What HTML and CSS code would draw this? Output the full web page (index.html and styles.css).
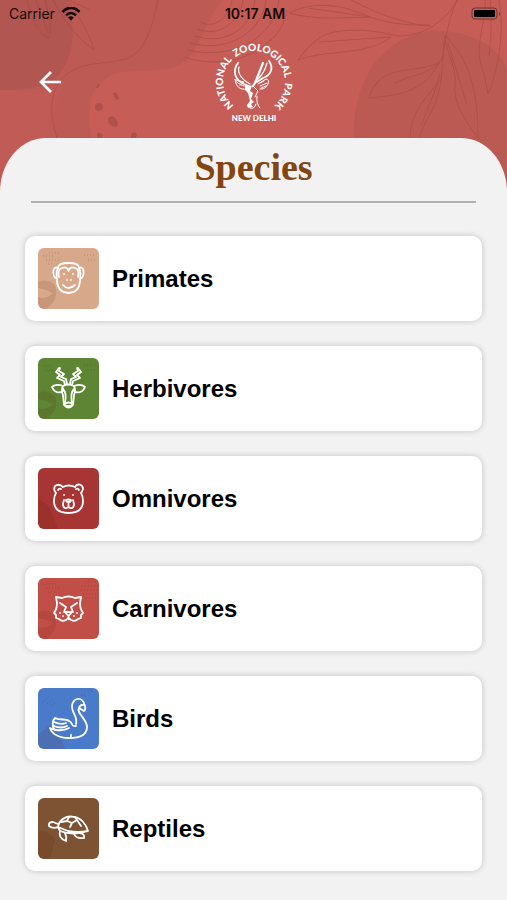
FILE: index.html
```html
<!DOCTYPE html>
<html lang="en">
<head>
    <meta charset="utf-8">
    <meta name="viewport" content="width=device-width, initial-scale=1">
    <title>Species - National Zoological Park</title>
    <link rel="stylesheet" href="styles.css">
</head>

<body>
    <header class="header">
        <!-- Decorative foliage behind the header -->
        <svg class="header-art" viewBox="0 0 507 196" preserveAspectRatio="xMidYMin slice" aria-hidden="true">
            <rect width="507" height="196" fill="#c65d57"/>
            <path d="M0 0H223C213 10 209 22 201 37C193 53 188 65 166 69C140 73 116 67 102 82C89 91 88 106 91 138V196H0Z" fill="#bd5a54"/>
            <path d="M0 0H67C74 19 77 52 60 73C48 90 20 90 0 90Z" fill="#b15650"/>
            <path d="M354 138C352 80 382 38 430 31C468 29 497 46 507 67V196H354Z" fill="#bb5953"/>
            <path d="M0 90C20 90 42 90 53 88C72 71 48 105 57 138L62 196H0Z" fill="#c05b55"/>
            <g fill="none" stroke="#a94c47" stroke-opacity="0.7" stroke-width="1">
                <path d="M158 0C151 34 143 53 126 59C108 64 86 62 72 71C49 84 48 111 57 138"/>
                <path d="M27 0C32 25 44 37 49 38C53 31 47 8 45 0M36 0L48 33M53 0C64 22 82 43 94 49C88 31 76 11 67 0M69 0L90 10"/>
                <path d="M200 22C213 29 228 20 232 0M197 29C219 38 240 22 243 0M195 36C227 46 252 27 255 0M190 43C228 54 263 31 266 0M187 50C233 61 274 38 279 0M184 57C235 74 283 44 287 10"/>
                <path d="M458 0C444 22 424 36 398 36C378 31 353 28 335 32C320 34 308 46 298 60C327 49 368 56 391 37M319 42L391 37"/>
                <path d="M430 25C408 26 386 23 370 17C340 18 315 20 289 13C316 0 343 5 370 17M308 8L370 17M351 0C375 12 402 24 430 26"/>
                <path d="M457 0C444 29 446 51 440 62C422 72 395 67 382 78C375 84 371 91 369 98C399 95 423 93 440 62M395 83C412 74 426 76 440 62"/>
                <path d="M445 35C441 64 445 93 426 121L419 137M440 74C437 92 411 104 410 137M439 80L421 126"/>
                <path d="M445 35C462 54 478 74 478 138C466 121 453 104 455 84C457 67 445 51 445 35M448 43L467 105"/>
                <path d="M485 0C487 22 472 47 484 74L488 94C498 73 505 29 499 0M490 0C492 23 491 38 489 55"/>
            </g>
            <g fill="#af514b">
                <ellipse cx="98" cy="86" rx="3" ry="1" transform="rotate(-50 98 86)"/>
                <ellipse cx="116" cy="96" rx="2" ry="4" transform="rotate(-32 116 96)"/>
                <ellipse cx="99" cy="107" rx="4" ry="4"/>
                <path d="M108 118q4-4 8 1q4 5 0 8q-9-1-8-9zM97 134q3-4 6 2l-1 2h-5zM131 134q3-3 6 0l-1 4h-5z"/>
            </g>
        </svg>

        <div class="status-bar">
            <div class="status-carrier">
                <span>Carrier</span>
                <svg class="wifi" viewBox="0 0 20 14" aria-hidden="true">
                    <path d="M1.500 5C7-.5 13-.5 18.500 5M5 8.300C8 5.300 12 5.300 15 8.300" fill="none" stroke="#160b0b" stroke-width="2.600"/>
                    <path d="M7 10.500Q10 8 13 10.500L10 13.500Z" fill="#160b0b"/>
                </svg>
            </div>
            <time class="status-time">10:17 AM</time>
            <svg class="battery" viewBox="0 0 30 14" aria-hidden="true">
                <rect x="1" y="1" width="25" height="11" rx="3" fill="none" stroke="#75332f"/>
                <rect x="3" y="3" width="21" height="7" rx="1" fill="#000000"/>
                <path d="M28 5q2 2 0 4z" fill="#75332f"/>
            </svg>
        </div>

        <div class="top-bar">
            <button class="back-btn" type="button" aria-label="Back">
                <svg viewBox="0 0 24 24" aria-hidden="true">
                    <path d="M23 12H3M13 2L3 12L13 22" fill="none" stroke="#ffffff" stroke-width="2.700"/>
                </svg>
            </button>
            <svg class="logo" viewBox="0 0 90 90" role="img" aria-label="National Zoological Park, New Delhi">
                <path id="logo-arc" d="M26.700 70A31 31 0 1 1 63.300 70" fill="none"/>
                <text class="logo-ring"><textPath href="#logo-arc" startOffset="50%">NATIONAL&#160; ZOOLOGICAL&#160; PARK</textPath></text>
                <g fill="none" stroke="#ffffff" stroke-linecap="round" stroke-linejoin="round">
                    <path d="M29 26C23 34 26 43 35 47L40 50" stroke-width="1.800"/>
                    <path d="M30 30C28 36 33 43 41 47M58 26Q55 37 48 43" stroke-width="1.200"/>
                    <path d="M60 24C65 31 62 38 54 41L48 45" stroke-width="1.800"/>
                    <path d="M54 26L46 46L44 49" stroke-width="2.200"/>
                    <path d="M35 49C29 47 26 44 26 42C27 50 31 53 37 52M27 43L35 45L31 48M49 47L57 42Q61 43 59 47Q56 53 51 52M51 49L58 46M52 51L57 49M51 46L55 44" stroke-width="1"/>
                    <path d="M45 50L49 54L46 60M48 59Q47 67 51 71M41 71Q45 73 47 67" stroke-width="1"/>
                </g>
                <path d="M36 47L43 49L41 54L44 56L42 62L45 65L42 67L44 70L39 71L38 68L41 64L39 56L36 53Z" fill="#ffffff"/>
                <text class="logo-city" x="45" y="84">NEW DELHI</text>
            </svg>
        </div>
    </header>

    <main class="panel">
        <h1 class="title">Species</h1>

        <ul class="species-list">
            <li>
                <a class="species-card" href="#primates">
                    <svg class="tile tile-primates" viewBox="0 0 61 61" aria-hidden="true">
                        <g class="shade"><path d="M0 34Q8 30 16 36Q20 43 17 51Q13 58 8 61H0V49Q8 52 15 45Q8 41 0 40Z"/></g>
                        <path class="speckle" d="M5 8h12M8 12h14M11 5h12M10 16h4M46 7h12M50 12h8"/>
                        <g class="lines">
                            <path d="M20 20Q20 15 30.500 15Q41 15 41 20Q43 24 42 33Q41 45 30.500 45Q20 45 19 33Q18 24 20 20Z"/>
                            <path d="M20 20C14 17 14 29 19 31M41 20C47 17 47 29 42 31M21 29C20 25 20 21 24 20C28 18 30 21 30.500 23C31 21 33 18 37 20C41 21 41 25 40 29M25 37Q30 43 37 37"/>
                            <path d="M26 26v.1M35 26v.1M29 32v.1M33 32v.1"/>
                        </g>
                    </svg>
                    <span>Primates</span>
                </a>
            </li>
            <li>
                <a class="species-card" href="#herbivores">
                    <svg class="tile tile-herbivores" viewBox="0 0 61 61" aria-hidden="true">
                        <g class="shade"><path d="M0 35Q8 31 16 37Q20 44 17 52Q13 58 8 61H0V50Q8 53 15 46Q8 42 0 41Z"/></g>
                        <path class="speckle" d="M5 8h9M8 12h8M46 7h9M50 12h7"/>
                        <g class="lines">
                            <path d="M27 27L26 23L19 20L22 17L18 14L21 10M34 27L35 23L42 20L39 17L43 14L40 10"/>
                            <path d="M29 26L28 21L23 19L26 16L21 13L22 10M32 26L33 21L38 19L35 16L40 13L39 10"/>
                            <path d="M25 28C20 26 16 27 14 29C16 34 21 36 25 33M36 28C41 26 45 27 47 29C45 34 40 36 36 33M25 28Q30 25 36 28Q38 32 36 37L35 47Q31 52 26 47L25 37Q23 32 25 28Z"/>
                            <path d="M25 31Q29 35 27 45M36 31Q32 35 34 45M27 46Q31 43 34 46M28 48H33"/>
                        </g>
                    </svg>
                    <span>Herbivores</span>
                </a>
            </li>
            <li>
                <a class="species-card" href="#omnivores">
                    <svg class="tile tile-omnivores" viewBox="0 0 61 61" aria-hidden="true">
                        <g class="shade"><path d="M0 31L11 38L20 61H0Z"/></g>
                        <g class="lines">
                            <path d="M25 19Q30.500 16 37 19C39 15 45 16 45 21Q44 24 43 25Q45 28 45 33C45 42 39 45 30.500 45C22 45 16 42 16 33Q16 28 18 25Q15 22 17 18Q21 15 25 19Z"/>
                            <path d="M20 22Q21 20 23 21M38 21Q40 20 41 22M30.500 34V39M28 32Q30.500 31 33 32Q33 34 30.500 34Q28 34 28 32M30.500 39Q26 42 25 37Q25 35 26 32M30.500 39Q35 42 36 37Q36 35 35 32"/>
                            <path d="M26 27v.1M35 27v.1"/>
                        </g>
                    </svg>
                    <span>Omnivores</span>
                </a>
            </li>
            <li>
                <a class="species-card" href="#carnivores">
                    <svg class="tile tile-carnivores" viewBox="0 0 61 61" aria-hidden="true">
                        <g class="shade"><path d="M0 34Q8 30 16 36Q20 43 17 51Q13 58 8 61H0V49Q8 52 15 45Q8 41 0 40Z"/></g>
                        <path class="speckle" d="M5 6h14M8 10h13M10 14h9M48 4h10M44 8h16M43 12h16M45 16h14M48 20h11"/>
                        <g class="lines">
                            <path d="M19 25L18 19L24 20Q30.500 17 37 20L43 19L42 25Q42 31 45 35L43 37L43 40L40 41Q37 44 33 42L30.500 40L28 42Q24 44 21 41L18 40L18 37L16 35Q19 31 19 25Z"/>
                            <path d="M22 25L28 29L26 34M39 25L33 29L35 34M27 34H34L30.500 38ZM30.500 38V41"/>
                            <path d="M25 38v.1M36 38v.1M22 35v.1M39 35v.1"/>
                        </g>
                    </svg>
                    <span>Carnivores</span>
                </a>
            </li>
            <li>
                <a class="species-card" href="#birds">
                    <svg class="tile tile-birds" viewBox="0 0 61 61" aria-hidden="true">
                        <g class="shade"><path d="M0 47L14 35L28 61H0Z"/></g>
                        <path class="speckle" d="M5 14l6-5M9 16l6-5M13 18l5-4M43 7h5M50 3h5"/>
                        <g class="lines">
                            <path d="M41 20C38 25 49 31 49 39C49 48 41 50 31 50C21 50 14 46 12 40L17 42M38 36C40 29 34 25 34 19C34 13 38 10 42 11C46 12 46 16 47 18Q48 22 46 23L41 20Q42 16 46 17"/>
                            <path d="M17 42C13 38 15 32 17 30C22 33 28 30 31 33C36 35 32 39 38 38M16 34Q23 37 28 35M16 38Q23 41 29 38M18 42Q26 43 31 40M33 47V50"/>
                        </g>
                    </svg>
                    <span>Birds</span>
                </a>
            </li>
            <li>
                <a class="species-card" href="#reptiles">
                    <svg class="tile tile-reptiles" viewBox="0 0 61 61" aria-hidden="true">
                        <g class="shade"><path d="M0 34Q10 31 17 42L12 61H0Z"/></g>
                        <g class="lines">
                            <path d="M20 29C21 22 28 17 36 19C43 20 48 26 50 33Q40 35 30 33L20 29ZM20 29Q15 31 11 28Q10 24 15 24L20 26M20 29L22 33Q35 38 50 33"/>
                            <path d="M22 33Q20 40 28 43Q29 39 27 35M36 36Q38 41 46 40Q47 36 42 35M23 24L29 23L34 25L32 29M29 23L31 19M34 25L39 22L37 19M39 22L43 28"/>
                        </g>
                    </svg>
                    <span>Reptiles</span>
                </a>
            </li>
        </ul>
    </main>
</body>
</html>
```
FILE: styles.css
```css
* {
    box-sizing: border-box;
}

body {
    font-family: "Liberation Sans", Arial, sans-serif;
    background-color: #f2f2f2;
    color: #000000;
    margin: 0;
}

.header {
    position: relative;
    padding-bottom: 68px;
    overflow: hidden;
}

.header-art {
    position: absolute;
    top: 0;
    left: 0;
    width: 100%;
    height: 100%;
}

.status-bar {
    position: relative;
    display: grid;
    grid-template-columns: 1fr auto 1fr;
    align-items: center;
    height: 27px;
    padding: 0 6px 0 9px;
    font-family: Inter, sans-serif;
    font-size: 14px;
    color: #160b0b;
}

.status-carrier {
    display: flex;
    align-items: center;
    gap: 6px;
}

.wifi {
    width: 20px;
    height: 14px;
}

.status-time {
    font-weight: 600;
}

.battery {
    width: 30px;
    height: 14px;
    justify-self: end;
}

.top-bar {
    position: relative;
    display: grid;
    grid-template-columns: 1fr auto 1fr;
    align-items: center;
    padding: 10px 32px 0;
}

.back-btn {
    width: 36px;
    height: 36px;
    padding: 6px;
    border: none;
    background: none;
    cursor: pointer;
}

.back-btn svg {
    display: block;
    width: 24px;
    height: 24px;
}

.logo {
    width: 90px;
    height: 90px;
}

.logo text {
    fill: #ffffff;
    font-family: Lato, sans-serif;
    font-weight: 900;
    text-anchor: middle;
}

.logo .logo-ring {
    font-size: 10px;
    white-space: pre;
}

.logo .logo-city {
    font-size: 8px;
}

.panel {
    position: relative;
    margin-top: -57px;
    padding: 7px 25px 29px;
    border-radius: 46px 46px 0 0 / 54px 54px 0 0;
    background-color: #f2f2f2;
}

.title {
    margin: 0 6px;
    padding-bottom: 12px;
    border-bottom: 2px solid #b0b0b0;
    font-family: "Liberation Serif", serif;
    font-size: 38px;
    line-height: 44px;
    text-align: center;
    color: #834611;
}

.species-list {
    display: grid;
    gap: 25px;
    margin: 0;
    padding: 33px 0 0;
    list-style: none;
}

.species-card {
    display: flex;
    align-items: center;
    gap: 13px;
    padding: 12px 13px;
    border-radius: 10px;
    background-color: #ffffff;
    box-shadow: 0 0 6px rgba(0, 0, 0, 0.2);
    color: #000000;
    font-size: 24px;
    line-height: 28px;
    font-weight: 700;
    text-decoration: none;
}

.tile {
    width: 61px;
    height: 61px;
    border-radius: 6px;
}

.tile-primates {
    background-color: #d8a88a;
}

.tile-herbivores {
    background-color: #5d8534;
}

.tile-omnivores {
    background-color: #a63533;
}

.tile-carnivores {
    background-color: #c24e48;
}

.tile-birds {
    background-color: #4a7bcb;
}

.tile-reptiles {
    background-color: #7d5333;
}

.lines {
    fill: none;
    stroke: #ffffff;
    stroke-width: 1.8;
    stroke-linecap: round;
    stroke-linejoin: round;
}

.shade {
    fill: #5a1a00;
    opacity: 0.12;
}

.speckle {
    fill: none;
    stroke: #5a1a00;
    stroke-width: 1;
    stroke-dasharray: 1 2;
    opacity: 0.25;
}
```
